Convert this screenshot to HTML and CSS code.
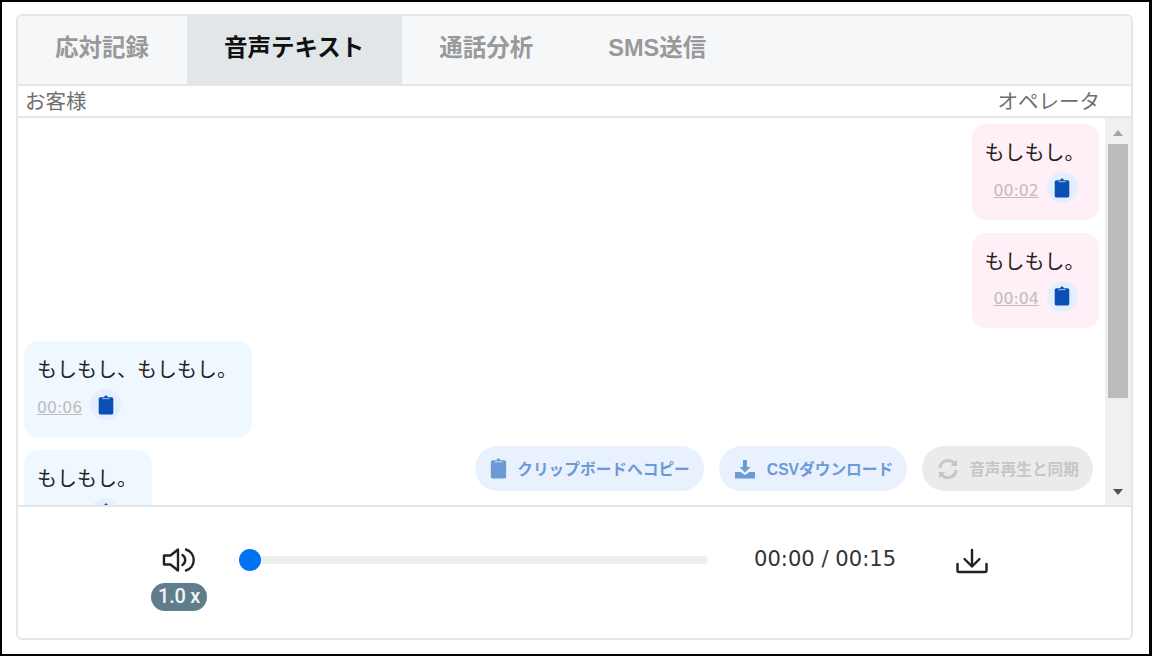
FILE: index.html
```html
<!DOCTYPE html>
<html lang="ja">
<head>
<meta charset="utf-8">
<title>音声テキスト</title>
<link rel="stylesheet" href="styles.css">
</head>
<body>
<svg class="defs" width="0" height="0" aria-hidden="true">
  <symbol id="clip" viewBox="0 0 16 20">
    <path d="M6.2 2.2C6.4 1 7.1.4 8 .4s1.600.6 1.800 1.800h3.700c1 0 1.800.8 1.800 1.800v13.800c0 1-.8 1.800-1.800 1.800h-11c-1 0-1.800-.8-1.800-1.800V4c0-1 .8-1.800 1.800-1.800z" fill="currentColor"/>
    <rect x="4.500" y="3" width="7" height="1.200" fill="#fff" opacity=".55"/>
  </symbol>
</svg>
<div class="frame">
  <main class="card">
    <nav class="tabs">
      <div class="tab">応対記録</div>
      <div class="tab active">音声テキスト</div>
      <div class="tab">通話分析</div>
      <div class="tab">SMS送信</div>
    </nav>
    <div class="labels"><span>お客様</span><span class="op">オペレータ</span></div>
    <section class="chat">
      <div class="messages">
        <div class="row right">
          <div class="bubble pink">
            <p>もしもし。</p>
            <div class="meta"><a>00:02</a><span class="copy"><svg><use href="#clip"/></svg></span></div>
          </div>
        </div>
        <div class="row right">
          <div class="bubble pink">
            <p>もしもし。</p>
            <div class="meta"><a>00:04</a><span class="copy"><svg><use href="#clip"/></svg></span></div>
          </div>
        </div>
        <div class="row">
          <div class="bubble blue">
            <p>もしもし、もしもし。</p>
            <div class="meta"><a>00:06</a><span class="copy"><svg><use href="#clip"/></svg></span></div>
          </div>
        </div>
        <div class="row">
          <div class="bubble blue short">
            <p>もしもし。</p>
            <div class="meta"><span class="copy"><svg><use href="#clip"/></svg></span></div>
          </div>
        </div>
      </div>
      <div class="scrollbar">
        <span class="arrow up"></span>
        <div class="track"><div class="thumb"></div></div>
        <span class="arrow down"></span>
      </div>
      <div class="actions">
        <button class="pill"><svg class="i-clip"><use href="#clip"/></svg>クリップボードへコピー</button>
        <button class="pill csv"><svg class="i-dl" viewBox="0 0 20 20"><path d="M8 1h4v7h3.500L10 13.500 4.500 8H8z" fill="currentColor"/><path d="M0 13h5.500L10 16l4.500-3H20v6.500H0z" fill="currentColor"/></svg>CSVダウンロード</button>
        <button class="pill off"><svg class="i-sync" viewBox="0 0 22 22" fill="none" stroke="currentColor" stroke-width="3"><path d="M3 10A8.200 8.200 0 0 1 17.500 5.500"/><path d="M19 12A8.200 8.200 0 0 1 4.500 16.500"/><path d="M20 1.500V8h-6.500z" fill="currentColor" stroke="none"/><path d="M2 20.500V14h6.500z" fill="currentColor" stroke="none"/></svg>音声再生と同期</button>
      </div>
    </section>
    <footer class="player">
      <div class="volume">
        <svg class="speaker" viewBox="0 0 34 26" fill="none" stroke="#222" stroke-width="2.400"><path d="M2 8.500h6.500L16 2.500v21l-7.500-6H2z" stroke-linejoin="round"/><path d="M20.500 8a6 6 0 0 1 0 10" stroke-linecap="round"/><path d="M24 2.500a11 11 0 0 1 0 21" stroke-linecap="round"/></svg>
        <span class="speed">1.0 x</span>
      </div>
      <div class="seek"><span class="knob"></span></div>
      <div class="time">00:00 / 00:15</div>
      <svg class="save" viewBox="0 0 32 26" fill="none" stroke="#222" stroke-width="2.400" stroke-linecap="round" stroke-linejoin="round"><path d="M16 2v16"/><path d="M8.500 11l7.500 7.500 7.500-7.500"/><path d="M1.500 16v6.500c0 1 .5 1.500 1.500 1.500h26c1 0 1.500-.5 1.500-1.500V16"/></svg>
    </footer>
  </main>
</div>
</body>
</html>
```
FILE: styles.css
```css
* { box-sizing: border-box; }
html, body { margin: 0; padding: 0; background: #fff; }
body { font-family: "Noto Sans CJK JP", "Noto Sans", sans-serif; color: #212529; overflow: hidden; }
.defs { display: block; position: absolute; }
.frame { width: 1152px; height: 656px; border: 2px solid #000; border-right-width: 3px; padding: 12px 16px 14px 14px; }
.card { height: 100%; border: 2px solid #e6e6e6; border-radius: 6px; display: flex; flex-direction: column; overflow: hidden; background: #fff; }

.tabs { height: 70px; flex: none; display: flex; background: #f5f7f9; border-bottom: 2px solid #e4e6e8; }
.tab { padding: 0 38px 0 37px; height: 68px; font-family: "Liberation Sans", "Noto Sans CJK JP", sans-serif; line-height: 65px; font-size: 23.500px; font-weight: 700; color: #999; white-space: nowrap; }
.tab.active { color: #111; background: #e1e6e9; }

.labels { height: 32px; flex: none; display: flex; justify-content: space-between; padding: 0 31px 0 7px; border-bottom: 2px solid #e6e6e6; font-size: 20.500px; line-height: 29px; color: #6f6f6f; }

.chat { flex: none; height: 389px; position: relative; display: flex; border-bottom: 2px solid #e6e6e6; }
.messages { flex: 1; min-width: 0; height: 387px; overflow: hidden; padding: 6px 6px 0; display: flex; flex-direction: column; gap: 13px; }
.row { display: flex; flex: none; }
.row.right { justify-content: flex-end; }
.bubble { border-radius: 14px; padding: 13px 14.500px 0 13px; height: 95.500px; }
.bubble.pink { background: #ffeff6; }
.bubble.blue { background: #eff7ff; }
.bubble p { margin: 0; font-size: 20px; line-height: 30px; color: #222; white-space: nowrap; }
.meta { display: flex; align-items: center; gap: 8px; margin-top: 5px; }
.right .meta { padding-left: 9px; }
.short .meta { padding-left: 53px; }
.meta a { margin-top: 6px; font-family: "DejaVu Sans", Verdana, sans-serif; font-size: 15.700px; line-height: 20px; color: #bdbdbd; text-decoration: underline; }
.copy { width: 31px; height: 31px; border-radius: 50%; background: #e4eeff; display: flex; align-items: center; justify-content: center; color: #0a50b4; }
.copy svg { width: 16px; height: 20px; }

.scrollbar { width: 26px; flex: none; background: #f0f0f0; display: flex; flex-direction: column; align-items: center; }
.track { flex: 1; width: 100%; padding: 0 3px; }
.thumb { height: 254px; background: #bcbcbc; }
.arrow { flex: none; width: 0; height: 0; border-left: 5px solid transparent; border-right: 5px solid transparent; }
.arrow.up { border-bottom: 6px solid #a3a3a3; margin: 12px 0 8px; }
.arrow.down { border-top: 6px solid #505050; margin: 8px 0 10px; }

.actions { position: absolute; right: 38px; bottom: 14px; display: flex; gap: 15px; }
.pill { height: 45px; border: 0; border-radius: 23px; padding: 0 14px 0 15px; display: flex; align-items: center; gap: 10px; background: #e9f1ff; color: #6b9bd6; font: 700 15.700px "Liberation Sans", "Noto Sans CJK JP", sans-serif; white-space: nowrap; }
.pill.csv { padding: 0 14px 0 16px; gap: 12px; }
.pill.off { background: #ebebeb; color: #c6c6c6; }
.i-clip { width: 17px; height: 21px; }
.i-dl { width: 20px; height: 20px; }
.i-sync { width: 22px; height: 22px; }

.player { flex: 1; min-height: 0; display: flex; align-items: flex-start; padding-top: 40px; }
.volume { width: 56px; margin-left: 133px; display: flex; flex-direction: column; align-items: center; gap: 10px; }
.speaker { width: 34px; height: 26px; }
.speed { width: 56px; height: 28px; border-radius: 14px; background: #607d8b; color: #f2f5f7; font: 500 20px/27px "Roboto", sans-serif; letter-spacing: -.3px; text-align: center; }
.seek { width: 458px; height: 8px; margin: 9px 0 0 43px; background: #eeeeee; border-radius: 4px; position: relative; }
.knob { position: absolute; left: -11px; top: -7px; width: 22px; height: 22px; border-radius: 50%; background: #0073f5; }
.time { margin: 0 0 0 46px; font-family: "DejaVu Sans", Verdana, sans-serif; font-size: 21.100px; line-height: 24px; color: #333; white-space: nowrap; }
.save { width: 32px; height: 26px; margin: 1px 0 0 60px; }
```
